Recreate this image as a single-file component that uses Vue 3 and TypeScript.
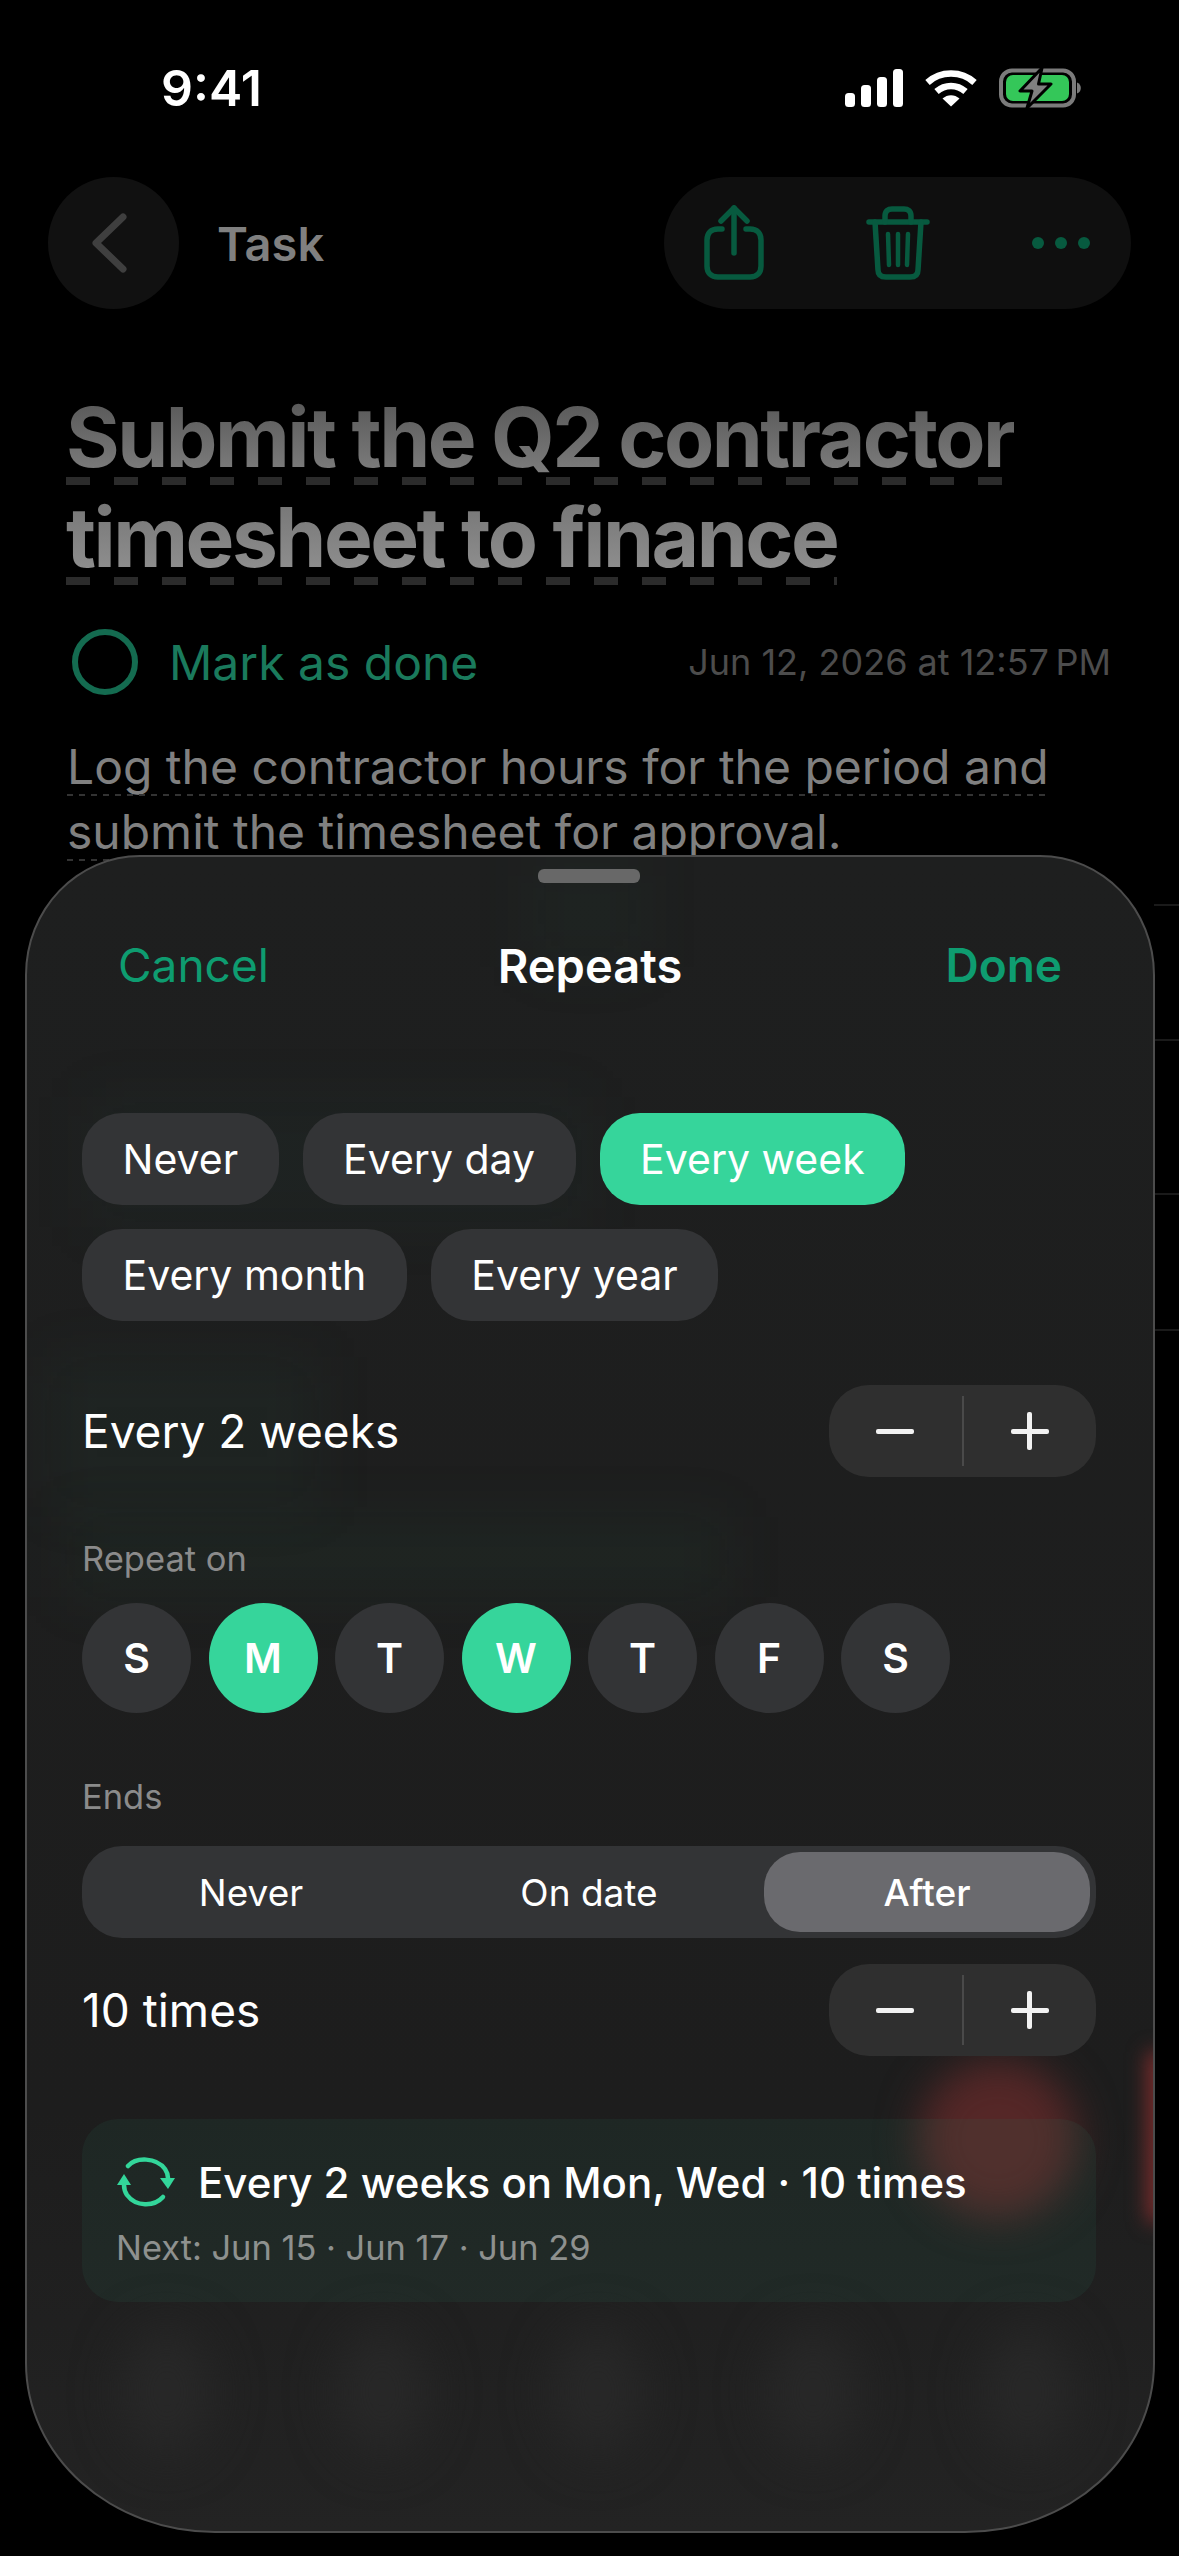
<script setup lang="ts">
// Repeat picker sheet over a dimmed task detail screen.
const frequencies = [
  { label: 'Never', active: false },
  { label: 'Every day', active: false },
  { label: 'Every week', active: true },
  { label: 'Every month', active: false },
  { label: 'Every year', active: false },
];

const weekdays = [
  { label: 'S', active: false },
  { label: 'M', active: true },
  { label: 'T', active: false },
  { label: 'W', active: true },
  { label: 'T', active: false },
  { label: 'F', active: false },
  { label: 'S', active: false },
];

const endOptions = [
  { label: 'Never', active: false },
  { label: 'On date', active: false },
  { label: 'After', active: true },
];

const tabBlobs = [1, 2, 3, 4, 5];
const peekLines = [904, 1039, 1193, 1329];
</script>

<template>
  <div class="screen">
    <div class="status-bar">
      <span class="clock">9:41</span>
      <div class="status-icons">
        <svg width="58" height="38" viewBox="0 0 58 38" fill="#fff">
          <rect x="0" y="24" width="10" height="14" rx="3.5" />
          <rect x="16" y="16" width="10" height="22" rx="3.5" />
          <rect x="32" y="8" width="10" height="30" rx="3.5" />
          <rect x="48" y="0" width="10" height="38" rx="3.5" />
        </svg>
        <svg width="52" height="38" viewBox="0 0 52 38" fill="none" stroke="#fff">
          <path d="M2.5 13.5C15.5 1.5 36.5 1.5 49.5 13.5" stroke-width="6.5" />
          <path d="M11.5 22.5C20 15 32 15 40.5 22.5" stroke-width="6.5" />
          <path d="M17.500 29.500L26 37.500L34.500 29.500C29.500 25 22.500 25 17.500 29.500Z" fill="#fff" stroke="none" />
        </svg>
        <svg class="battery" width="82" height="42" viewBox="0 0 82 42" fill="none">
          <rect x="2" y="3.500" width="73" height="35" rx="11" stroke="#7b7b7b" stroke-width="4" />
          <rect x="7" y="8" width="63" height="26" rx="7" fill="#34c759" />
          <path d="M78 15.500C81 16.500 81.800 19 81.800 21C81.800 23 81 25.500 78 26.500Z" fill="#7b7b7b" />
          <path d="M43 1L21 24H33L28 41L52 17H39.500Z" fill="#808080" stroke="#000" stroke-width="3" stroke-linejoin="round" />
        </svg>
      </div>
    </div>

    <header class="nav">
      <div class="nav-left">
        <button type="button" class="back-btn">
          <svg width="40" height="64" viewBox="0 0 40 64" fill="none" stroke="#3f3f3f" stroke-width="7" stroke-linecap="round" stroke-linejoin="round">
            <path d="M34 6L7 32L34 58" />
          </svg>
        </button>
        <span class="nav-title">Task</span>
      </div>
      <div class="nav-actions">
        <svg width="60" height="76" viewBox="0 0 60 76" fill="none" stroke="#075a3f" stroke-width="5.500" stroke-linecap="round" stroke-linejoin="round">
          <path d="M18 24H14C7 24 3 28 3 35V61C3 68 7 72 14 72H46C53 72 57 68 57 61V35C57 28 53 24 46 24H42" />
          <path d="M30 48V3" />
          <path d="M17 16L30 3L43 16" />
        </svg>
        <svg width="64" height="74" viewBox="0 0 64 74" fill="none" stroke="#075a3f" stroke-width="5.500" stroke-linecap="round" stroke-linejoin="round">
          <path d="M3 16H61" />
          <path d="M19 16V10C19 5 22 3 26 3H38C42 3 45 5 45 10V16" />
          <path d="M9 16L12 64C12 69 15 71 20 71H44C49 71 52 69 52 64L55 16" />
          <path d="M22 28L23 59M32 28V59M42 28L41 59" stroke-width="4.500" />
        </svg>
        <div class="dots"><i></i><i></i><i></i></div>
      </div>
    </header>

    <h1 class="title">
      <span class="title-line">Submit the Q2 contractor</span>
      <span class="title-line">timesheet to finance</span>
    </h1>

    <div class="status-row">
      <div class="mark">
        <span class="mark-ring"></span>
        <span class="mark-label">Mark as done</span>
      </div>
      <span class="stamp">Jun 12, 2026 at 12:57&#8239;PM</span>
    </div>

    <p class="desc">
      <span class="desc-line">Log the contractor hours for the period and</span>
      <span class="desc-line">submit the timesheet for approval.</span>
    </p>

    <!-- faint list separators peeking out to the right of the sheet -->
    <div v-for="y in peekLines" :key="y" class="peek" :style="{ top: y + 'px' }"></div>

    <section class="sheet">
      <div class="glow glow-green-a"></div>
      <div class="glow glow-green-b"></div>
      <div class="glow glow-green-c"></div>
      <div class="glow glow-green-d"></div>
      <div class="glow glow-red"></div>
      <div class="glow glow-red-edge"></div>
      <div class="tab-ghosts">
        <div v-for="n in tabBlobs" :key="n" class="tab-ghost"></div>
      </div>

      <div class="sheet-body">
        <div class="handle"></div>

        <div class="sheet-head">
          <span class="link">Cancel</span>
          <span class="sheet-title">Repeats</span>
          <span class="link link--strong">Done</span>
        </div>

        <div class="chips">
          <span
            v-for="item in frequencies"
            :key="item.label"
            class="chip"
            :class="{ 'chip--on': item.active }"
          >{{ item.label }}</span>
        </div>

        <div class="value-row value-row--interval">
          <span class="value">Every 2 weeks</span>
          <div class="stepper">
            <span class="step"><i class="bar"></i></span>
            <span class="step-sep"></span>
            <span class="step"><i class="bar"></i><i class="bar bar--v"></i></span>
          </div>
        </div>

        <div class="label label--repeat">Repeat on</div>
        <div class="days">
          <span
            v-for="(day, i) in weekdays"
            :key="i"
            class="day"
            :class="{ 'day--on': day.active }"
          >{{ day.label }}</span>
        </div>

        <div class="label label--ends">Ends</div>
        <div class="segment">
          <span
            v-for="opt in endOptions"
            :key="opt.label"
            class="seg"
            :class="{ 'seg--on': opt.active }"
          >{{ opt.label }}</span>
        </div>

        <div class="value-row value-row--count">
          <span class="value">10 times</span>
          <div class="stepper">
            <span class="step"><i class="bar"></i></span>
            <span class="step-sep"></span>
            <span class="step"><i class="bar"></i><i class="bar bar--v"></i></span>
          </div>
        </div>

        <div class="summary">
          <div class="summary-top">
            <svg width="60" height="50" viewBox="0 0 60 50" fill="none" stroke="#33d69a" stroke-width="4.500" stroke-linecap="round">
              <path d="M12 9C20 0 40 0 49 12C51 15 52 18 52 21" />
              <path d="M47 40C38 50 20 50 11 38C9 35 8 32 8 28" />
              <path d="M44 21H59L52 32Z" fill="#33d69a" stroke="none" />
              <path d="M1 28H15L8 17Z" fill="#33d69a" stroke="none" />
            </svg>
            <span class="summary-text">Every 2 weeks on Mon, Wed · 10 times</span>
          </div>
          <div class="summary-next">Next: Jun 15 · Jun 17 · Jun 29</div>
        </div>
      </div>
    </section>
  </div>
</template>

<style scoped>
.screen {
  position: relative;
  width: 1179px;
  height: 2556px;
  overflow: hidden;
  background: #000;
  color: #fff;
  font-family: Inter, "Noto Sans", sans-serif;
}

.status-bar {
  display: flex;
  align-items: center;
  justify-content: space-between;
  height: 44px;
  margin-top: 66px;
  padding: 0 98px 0 161px;
}

.clock {
  font-size: 50px;
  font-weight: 600;
}

.status-icons {
  display: flex;
  align-items: center;
  gap: 22px;
}

.nav {
  display: flex;
  align-items: center;
  justify-content: space-between;
  height: 132px;
  margin-top: 67px;
  padding: 0 48px;
}

.nav-left {
  display: flex;
  align-items: center;
  gap: 38px;
}

.back-btn {
  display: flex;
  align-items: center;
  justify-content: center;
  width: 131px;
  height: 132px;
  padding: 0 10px 0 0;
  border: 0;
  border-radius: 50%;
  background: #111;
}

.nav-title {
  font-size: 47px;
  font-weight: 600;
  color: #808080;
}

.nav-actions {
  display: flex;
  align-items: center;
  justify-content: space-between;
  box-sizing: border-box;
  width: 467px;
  height: 132px;
  padding: 0 41px 0 40px;
  border-radius: 66px;
  background: #0f0f0f;
}

.dots {
  display: flex;
  gap: 11px;
}

.dots i {
  width: 12px;
  height: 12px;
  border-radius: 50%;
  background: #075a3f;
}

.title {
  margin: 79px 0 0;
  padding: 0 0 0 66px;
  font-size: 82px;
  font-weight: 700;
  line-height: 100px;
  letter-spacing: -2.500px;
}

.title-line {
  position: relative;
  display: block;
  width: fit-content;
  -webkit-background-clip: text;
  background-clip: text;
  color: transparent;
}

.title-line:first-child {
  background-image: linear-gradient(180deg, #5a5a5a 15%, #7c7c7c 85%);
}

.title-line:last-child {
  background-image: linear-gradient(180deg, #777 15%, #8f8f8f 85%);
}

.title-line::after {
  content: "";
  position: absolute;
  left: 0;
  right: 0;
  bottom: 3px;
  height: 8px;
  background: repeating-linear-gradient(90deg, #2b2b2b 0 24px, transparent 24px 48px);
}

.status-row {
  display: flex;
  align-items: center;
  justify-content: space-between;
  margin-top: 41px;
  padding: 0 68px 0 72px;
}

.mark {
  display: flex;
  align-items: center;
  gap: 31px;
}

.mark-ring {
  width: 66px;
  height: 66px;
  box-sizing: border-box;
  border: 6px solid #146b50;
  border-radius: 50%;
}

.mark-label {
  font-size: 48px;
  color: #1a7a5c;
}

.stamp {
  font-size: 36px;
  color: #4c4c4c;
}

.desc {
  margin: 39px 0 0;
  padding-left: 67px;
  font-size: 48px;
  line-height: 65px;
  color: #808080;
}

.desc-line {
  position: relative;
  display: block;
  width: fit-content;
}

.desc-line::after {
  content: "";
  position: absolute;
  left: 0;
  right: 0;
  bottom: 3px;
  height: 2px;
  background: repeating-linear-gradient(90deg, #333 0 6px, transparent 6px 12px);
}

.peek {
  position: absolute;
  right: 0;
  width: 25px;
  height: 2px;
  background: #1a1a1a;
}

.sheet {
  position: absolute;
  left: 25px;
  top: 855px;
  box-sizing: border-box;
  width: 1130px;
  height: 1678px;
  overflow: hidden;
  border: 2px solid #4c4c4c;
  border-radius: 115px 115px 190px 190px / 120px 120px 170px 170px;
  background: linear-gradient(180deg, #1e1f1f 0%, #1d1d1d 75%, #232323 100%);
}

.glow {
  position: absolute;
  filter: blur(28px);
}

.glow-green-a {
  left: 60px;
  top: 240px;
  width: 500px;
  height: 130px;
  background: rgba(40, 110, 80, 0.06);
}

.glow-green-b {
  left: 20px;
  top: 500px;
  width: 270px;
  height: 150px;
  background: rgba(40, 120, 85, 0.07);
}

.glow-green-c {
  left: 40px;
  top: 660px;
  width: 660px;
  height: 80px;
  background: rgba(40, 110, 80, 0.08);
}

.glow-green-d {
  left: 500px;
  top: 0;
  width: 120px;
  height: 110px;
  background: rgba(40, 120, 85, 0.05);
}

.glow-red {
  left: 892px;
  top: 1203px;
  width: 158px;
  height: 158px;
  border-radius: 50%;
  background: #552727;
  filter: blur(20px);
}

.glow-red-edge {
  right: -30px;
  top: 1195px;
  width: 36px;
  height: 170px;
  background: #7a2c2c;
  filter: blur(10px);
}

.tab-ghosts {
  position: absolute;
  left: 95px;
  right: 80px;
  top: 1470px;
  display: flex;
  justify-content: space-between;
}

.tab-ghost {
  width: 90px;
  height: 130px;
  border-radius: 50%;
  background: #282828;
  filter: blur(24px);
}

.sheet-body {
  position: relative;
  display: flex;
  flex-direction: column;
  padding: 12px 57px 0 55px;
}

.handle {
  align-self: center;
  width: 102px;
  height: 14px;
  border-radius: 6px;
  background: #686868;
}

.sheet-head {
  display: grid;
  grid-template-columns: 1fr auto 1fr;
  align-items: center;
  height: 60px;
  margin-top: 52px;
  padding: 0 34px 0 36px;
  font-size: 46px;
}

.link {
  color: #0e9c70;
}

.link--strong {
  justify-self: end;
  font-weight: 600;
}

.sheet-title {
  font-size: 47px;
  font-weight: 600;
}

.chips {
  display: flex;
  flex-wrap: wrap;
  gap: 24px;
  width: 900px;
  margin-top: 118px;
}

.chip {
  display: flex;
  align-items: center;
  height: 92px;
  padding: 0 40.500px;
  border-radius: 40px;
  background: #333436;
  font-size: 41px;
}

.chip--on {
  background: #36d59b;
}

.value-row {
  display: flex;
  align-items: center;
  justify-content: space-between;
}

.value-row--interval {
  margin-top: 64px;
}

.value-row--count {
  margin-top: 26px;
}

.value {
  font-size: 46px;
}

.stepper {
  display: flex;
  align-items: center;
  width: 267px;
  height: 92px;
  border-radius: 40px;
  background: #2f2f2f;
}

.step {
  position: relative;
  display: flex;
  flex: 1;
  align-items: center;
  justify-content: center;
  height: 100%;
}

.bar {
  width: 38px;
  height: 5px;
  border-radius: 2px;
  background: #f2f2f2;
}

.bar--v {
  position: absolute;
  width: 5px;
  height: 38px;
}

.step-sep {
  width: 2px;
  height: 70px;
  background: #4a4a4a;
}

.label {
  font-size: 34.500px;
  color: #8b8b8b;
}

.label--repeat {
  margin-top: 61px;
}

.label--ends {
  margin-top: 63px;
}

.days {
  display: flex;
  gap: 17.500px;
  margin-top: 24px;
}

.day {
  display: flex;
  align-items: center;
  justify-content: center;
  width: 109px;
  height: 110px;
  border-radius: 50%;
  background: #333436;
  font-size: 41px;
  font-weight: 600;
}

.day--on {
  background: #36d59b;
}

.segment {
  display: grid;
  grid-template-columns: repeat(3, 1fr);
  gap: 12px;
  align-items: center;
  box-sizing: border-box;
  height: 92px;
  margin-top: 29px;
  padding: 0 6px;
  border-radius: 40px;
  background: #333436;
}

.seg {
  display: flex;
  align-items: center;
  justify-content: center;
  height: 80px;
  border-radius: 36px;
  font-size: 37px;
}

.seg--on {
  background: #6a6a6e;
  font-weight: 500;
}

.summary {
  box-sizing: border-box;
  height: 183px;
  margin-top: 63px;
  padding: 36px 0 0 34px;
  border-radius: 36px;
  background: rgba(50, 130, 100, 0.11);
}

.summary-top {
  display: flex;
  align-items: center;
  gap: 22px;
  height: 54px;
}

.summary-text {
  font-size: 42px;
  font-weight: 500;
}

.summary-next {
  margin-top: 18px;
  font-size: 34.400px;
  color: #8e918f;
}
</style>

<style>
html,
body {
  margin: 0;
  background: #000;
}
</style>
